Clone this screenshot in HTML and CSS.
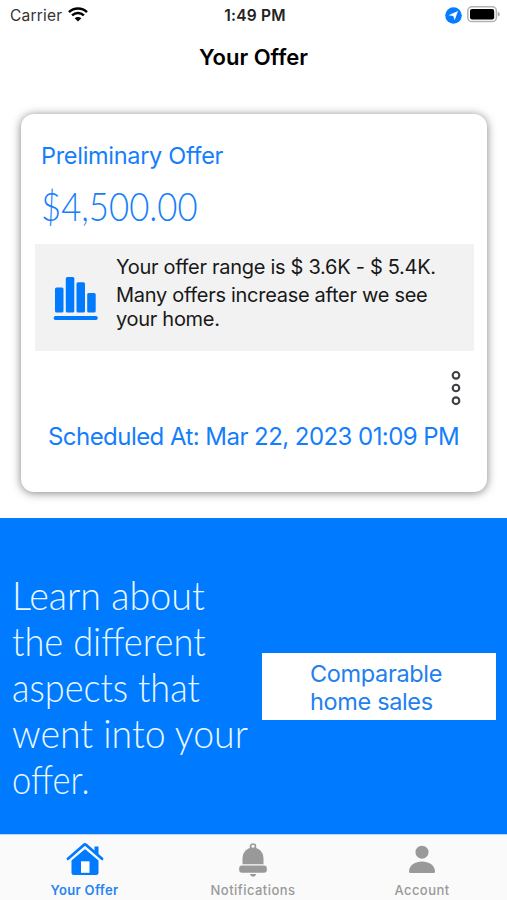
FILE: index.html
```html
<!DOCTYPE html>
<html lang="en">
<head>
<meta charset="utf-8">
<title>Your Offer</title>
<link rel="stylesheet" href="styles.css">
</head>
<body>
<div class="screen">
  <header class="status">
    <div class="status-left">
      <span class="carrier">Carrier</span>
      <svg class="wifi" width="20" height="15" viewBox="0 0 20 15" fill="none" stroke="#000" stroke-width="2.5">
        <path d="M1 5.1C6 .2 14 .2 19 5.1M4.1 8.4C7.5 5.2 12.500 5.2 15.900 8.400"/>
        <path d="M10 14.500L6.700 11.200C8.500 9.500 11.500 9.500 13.300 11.200Z" fill="#000" stroke="none"/>
      </svg>
    </div>
    <span class="time">1:49 PM</span>
    <div class="status-right">
      <svg width="17" height="17" viewBox="0 0 17 17"><circle cx="8.500" cy="8.500" r="8.300" fill="#087cff"/><path d="M13 4L9.600 13.300 8.300 8.900 3.500 8.200Z" fill="#fff"/></svg>
      <svg class="battery" width="33" height="17" viewBox="0 0 33 17"><rect x=".8" y=".8" width="28.600" height="14.800" rx="4.200" fill="#fff" stroke="#b3b3b3" stroke-width="1.500"/><rect x="3" y="3" width="24.200" height="10.400" rx="2" fill="#000"/><path d="M30.900 5.800Q32.800 6.500 32.800 8.200T30.900 10.600Z" fill="#aaa"/></svg>
    </div>
  </header>
  <h1 class="title">Your Offer</h1>

  <section class="card">
    <h2 class="label">Preliminary Offer</h2>
    <div class="amount">$4,500.00</div>
    <div class="range">
      <svg class="bars" width="45" height="45" viewBox="0 0 45 45" fill="#007aff">
        <rect x="2" y="11.500" width="8.500" height="25" rx="1.500"/><rect x="12.800" y="1" width="8.500" height="35.500" rx="1.500"/><rect x="23.500" y="6.200" width="8.500" height="30.300" rx="1.500"/><rect x="34.200" y="17" width="8.500" height="19.500" rx="1.500"/><rect x=".7" y="40" width="44" height="4" rx="1.700"/>
      </svg>
      <div class="range-text">
        <p class="range-line l1">Your offer range is $ 3.6K - $ 5.4K.</p>
        <p class="range-line l2">Many offers increase after we see</p>
        <p class="range-line l3">your home.</p>
      </div>
    </div>
    <svg class="more" width="10" height="36" viewBox="0 0 10 36" fill="none" stroke="#3d3d42" stroke-width="2.100"><circle cx="5" cy="5.300" r="3.300"/><circle cx="5" cy="18" r="3.300"/><circle cx="5" cy="30.700" r="3.300"/></svg>
    <p class="scheduled">Scheduled At: Mar 22, 2023 01:09 PM</p>
  </section>

  <section class="learn">
    <div class="learn-text">
      <div class="a">Learn about</div><div class="b">the different</div><div class="c">aspects that</div><div class="d">went into your</div><div class="e">offer.</div>
    </div>
    <div class="compare"><span>Comparable<br>home sales</span></div>
  </section>

  <nav class="tabs">
    <div class="tab active">
      <svg width="38" height="34" viewBox="0 0 38 34">
        <path d="M5.500 16L19 5 32.500 16V29.500Q32.500 32 30 32H8Q5.500 32 5.500 29.500Z" fill="#007aff"/>
        <path d="M2 16.500L18 3Q19 2 20 3L36 16.500" fill="none" stroke="#fafafa" stroke-width="6"/>
        <path d="M2 15.800L17.800 2Q19 1 20.200 2L36 15.800" fill="none" stroke="#007aff" stroke-width="2.800" stroke-linecap="round"/>
        <path d="M28.500 3.500H32.500V12L28.500 8.500Z" fill="#007aff"/>
        <rect x="15" y="18.300" width="8.500" height="11.500" fill="#fff"/>
      </svg>
      <span>Your Offer</span>
    </div>
    <div class="tab notices">
      <svg width="38" height="36" viewBox="0 0 38 36" fill="#999">
        <circle cx="19" cy="4.500" r="2.500" fill="none" stroke="#999" stroke-width="1.700"/>
        <path d="M8.500 22.300V16A10.500 10.500 0 0 1 29.500 16V22.300Z"/>
        <rect x="5.200" y="23.500" width="27.600" height="7.300" rx="2.800"/>
        <path d="M15.800 31.900H22.200Q21.200 34.700 19 34.700T15.800 31.900Z"/>
      </svg>
      <span>Notifications</span>
    </div>
    <div class="tab account">
      <svg width="38" height="34" viewBox="0 0 38 34" fill="#999"><circle cx="19" cy="9.200" r="6.500"/><path d="M6 28.500C6 22 12.500 18.500 19 18.500S32 22 32 28.500Q32 30 30.500 30H7.500Q6 30 6 28.500Z"/></svg>
      <span>Account</span>
    </div>
  </nav>
</div>
</body>
</html>
```
FILE: styles.css
```css
* { box-sizing: border-box; }
body { margin: 0; background: #fff; font-family: Inter, "Liberation Sans", sans-serif; color: #000; }
h1, h2, p { margin: 0; font-weight: 400; }
svg { display: block; flex: none; }
.screen { width: 507px; height: 900px; display: flex; flex-direction: column; overflow: hidden; white-space: nowrap; }
.status { height: 30px; display: grid; grid-template-columns: 1fr auto 1fr; align-items: center; padding: 0 7px 0 10px; font-size: 15.500px; }
.status-left, .status-right { display: flex; align-items: center; }
.status-left { gap: 6px; color: #333; }
.wifi { margin-bottom: 2px; }
.carrier { letter-spacing: .2px; }
.time { font-weight: 600; color: #222; letter-spacing: .2px; }
.status-right { justify-content: flex-end; gap: 5px; }
.battery { margin-bottom: 1px; }
.title { height: 56px; line-height: 55px; text-align: center; font-size: 22px; font-weight: 600; }
.card { margin: 28px 20px 0 21px; height: 378px; border-radius: 13px; background: #fff; box-shadow: 0 1px 10px rgba(0,0,0,.5); padding-top: 26px; display: flex; flex-direction: column; color: #157efb; }
.label { height: 32px; line-height: 32px; font-size: 23.500px; padding-left: 20px; letter-spacing: -.3px; }
.amount { height: 72px; line-height: 68px; font-family: Lato, sans-serif; font-weight: 300; font-size: 39px; margin-left: 20px; transform: scaleX(.89); transform-origin: left; }
.range { margin-left: 14px; width: 439px; height: 107px; background: #f2f2f2; display: flex; padding: 0 18px; }
.bars { margin-top: 32px; }
.range-text { margin-left: 18px; padding-top: 11px; font-size: 20px; color: #181818; }
.range-line { line-height: 24px; height: 24px; letter-spacing: -.29px; }
.l1 { margin-bottom: 4px; }
.more { align-self: flex-end; margin: 19px 26px 0 0; }
.scheduled { margin-top: 15px; height: 32px; line-height: 32px; padding-left: 27px; font-size: 24px; letter-spacing: -.55px; }
.learn { margin-top: 26px; height: 316px; background: #007aff; display: flex; align-items: center; justify-content: space-between; padding: 25px 11px 0 12px; }
.learn-text { color: #e8f8ff; font-family: Lato, sans-serif; font-weight: 300; font-size: 39px; line-height: 46px; width: 240px; margin-bottom: 3px; }
.learn-text div { transform-origin: left; }
.a { transform: scaleX(.965); }
.b { transform: scaleX(.93); }
.c { transform: scaleX(.925); }
.d { transform: scaleX(.96); }
.e { transform: scaleX(.885); }
.compare { width: 234px; height: 67px; background: #fff; color: #237fee; padding: 7px 0 0 48px; font-size: 23.500px; line-height: 28px; letter-spacing: -.35px; margin-bottom: 4px; }
.compare span { display: block; }
.tabs { height: 66px; background: #fafafa; border-top: 1px solid #b7d8fc; display: grid; grid-template-columns: repeat(3, 1fr); color: #999; font-size: 13px; font-weight: 500; }
.tab { display: flex; flex-direction: column; align-items: center; padding-top: 7px; }
.tab svg { height: 36px; }
.tab span { line-height: 16px; margin-top: 4px; letter-spacing: .45px; }
.active { color: #2684f5; }
.active span { font-weight: 600; letter-spacing: .35px; }
.notices, .account { position: relative; left: -.5px; }
```
